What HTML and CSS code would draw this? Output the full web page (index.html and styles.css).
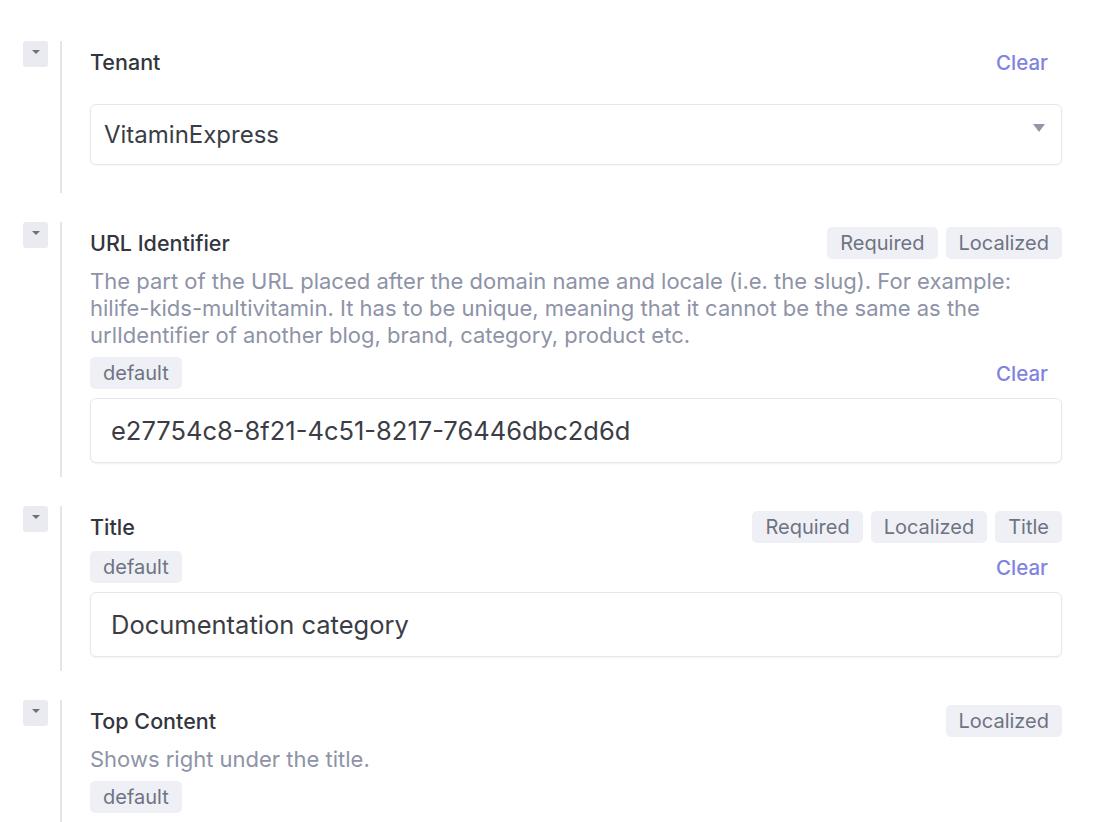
FILE: index.html
```html
<!DOCTYPE html>
<html lang="en">
<head>
    <meta charset="UTF-8">
    <meta name="viewport" content="width=device-width, initial-scale=1.0">
    <title>Edit Category</title>
    <link rel="stylesheet" href="styles.css">
</head>
<body>
    <div class="fields">

        <div class="field">
            <button class="toggle"><span class="caret"></span></button>
            <div class="field-main field-tenant">
                <div class="field-head">
                    <span class="label">Tenant</span>
                    <a class="clear">Clear</a>
                </div>
                <div class="select">
                    <span>VitaminExpress</span>
                    <span class="select-arrow"></span>
                </div>
            </div>
        </div>

        <div class="field">
            <button class="toggle"><span class="caret"></span></button>
            <div class="field-main">
                <div class="field-head">
                    <span class="label">URL Identifier</span>
                    <div class="tags">
                        <span class="tag">Required</span>
                        <span class="tag">Localized</span>
                    </div>
                </div>
                <p class="description">The part of the URL placed after the domain name and locale (i.e. the slug). For example: <span class="nowrap">hilife-kids-multivitamin.</span> It has to be unique, meaning that it cannot be the same as the urlIdentifier of another blog, brand, category, product etc.</p>
                <div class="locale-row">
                    <span class="tag">default</span>
                    <a class="clear">Clear</a>
                </div>
                <input class="text-input" type="text" value="e27754c8-8f21-4c51-8217-76446dbc2d6d">
            </div>
        </div>

        <div class="field">
            <button class="toggle"><span class="caret"></span></button>
            <div class="field-main">
                <div class="field-head">
                    <span class="label">Title</span>
                    <div class="tags">
                        <span class="tag">Required</span>
                        <span class="tag">Localized</span>
                        <span class="tag">Title</span>
                    </div>
                </div>
                <div class="locale-row">
                    <span class="tag">default</span>
                    <a class="clear">Clear</a>
                </div>
                <input class="text-input" type="text" value="Documentation category">
            </div>
        </div>

        <div class="field">
            <button class="toggle"><span class="caret"></span></button>
            <div class="field-main">
                <div class="field-head">
                    <span class="label">Top Content</span>
                    <div class="tags">
                        <span class="tag">Localized</span>
                    </div>
                </div>
                <p class="description">Shows right under the title.</p>
                <div class="locale-row">
                    <span class="tag">default</span>
                </div>
                <input class="text-input" type="text" value="">
            </div>
        </div>

    </div>
</body>
</html>
```

FILE: styles.css
```css
body {
    font-family: Inter, "Noto Sans", sans-serif;
    background-color: #fff;
    color: #33363e;
    margin: 0;
    padding: 0;
}

.fields {
    padding: 41px 38px 0 23px;
    display: flex;
    flex-direction: column;
    gap: 29px;
}

.field {
    display: flex;
    align-items: flex-start;
}

.toggle {
    width: 25px;
    height: 26px;
    margin: 0 12px 0 0;
    padding: 0;
    border: none;
    border-radius: 3px;
    background: #e9ebf1;
    display: flex;
    justify-content: center;
    padding-top: 9px;
    flex-shrink: 0;
}

.toggle .caret {
    width: 0;
    height: 0;
    border-left: 4px solid transparent;
    border-right: 4px solid transparent;
    border-top: 4px solid #6c7182;
}

.field-main {
    flex: 1;
    border-left: 2px solid #e3e5ea;
    padding: 0 0 14px 28px;
    min-width: 0;
}

.field-tenant {
    padding-bottom: 28px;
}

.field-head {
    margin-top: 5px;
    height: 32px;
    display: flex;
    align-items: center;
    justify-content: space-between;
}

.label {
    font-size: 21.5px;
    font-weight: 500;
    color: #33363e;
}

.tags {
    display: flex;
    gap: 8px;
}

.tag {
    display: inline-flex;
    align-items: center;
    height: 32px;
    padding: 0 13px;
    border-radius: 5px;
    background: #eef0f5;
    color: #6e7383;
    font-size: 20px;
}

.clear {
    font-size: 20.5px;
    font-weight: 500;
    color: #8083e0;
    padding-right: 14px;
    cursor: pointer;
}

.description {
    margin: 9px 0 0;
    font-size: 22px;
    line-height: 27px;
    color: #8e93a7;
}

.nowrap {
    white-space: nowrap;
}

.locale-row {
    margin-top: 8px;
    display: flex;
    align-items: center;
    justify-content: space-between;
}

.select {
    margin-top: 26px;
    height: 61px;
    box-sizing: border-box;
    border: 1px solid #e5e7ec;
    border-radius: 6px;
    padding: 0 16px 0 13px;
    display: flex;
    align-items: center;
    justify-content: space-between;
    font-size: 24px;
    color: #3a3d45;
    box-shadow: 0 1px 2px rgba(0, 0, 0, 0.04);
}

.select-arrow {
    width: 0;
    height: 0;
    border-left: 6px solid transparent;
    border-right: 6px solid transparent;
    border-top: 8px solid #9297a8;
    margin-top: -14px;
}

.text-input {
    display: block;
    width: 100%;
    box-sizing: border-box;
    margin-top: 9px;
    height: 65px;
    border: 1px solid #e5e7ec;
    border-radius: 6px;
    padding: 0 20px;
    font-family: inherit;
    font-size: 25.5px;
    color: #3a3d45;
    background: #fff;
    box-shadow: 0 1px 2px rgba(0, 0, 0, 0.05);
    outline: none;
}
```
